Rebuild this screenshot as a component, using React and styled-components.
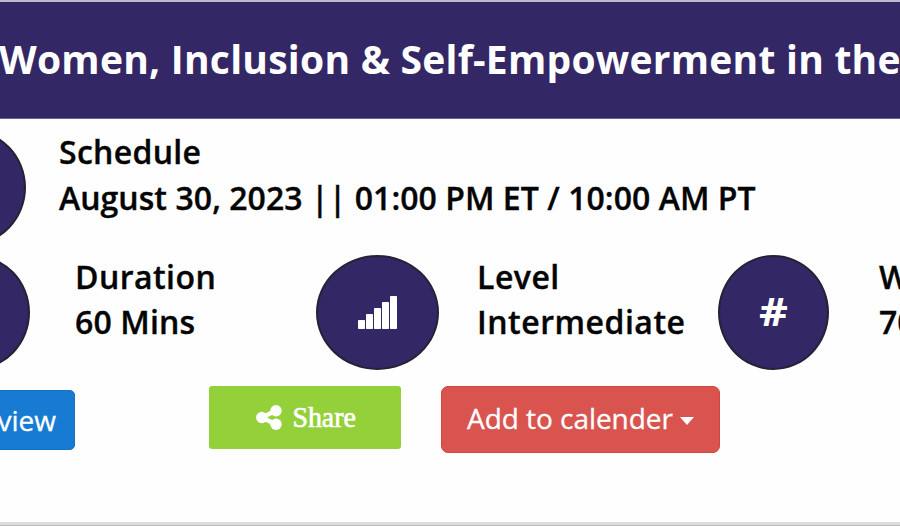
import React from 'react'
import styled, { createGlobalStyle } from 'styled-components'

const GlobalStyle = createGlobalStyle`
  *{
    box-sizing: border-box;
  }
  body{
    margin: 0;
    background: #fefefe;
    overflow: hidden;
    font-family: 'Open Sans', sans-serif;
  }
`
const Page = styled.div`
  width: 900px;
  height: 526px;
  overflow: hidden;
  display: flex;
  flex-direction: column;
`
const Header = styled.header`
  height: 119px;
  flex-shrink: 0;
  border-top: 2px solid #bdb9cf;
  border-bottom: 1px solid #6a6289;
  background: #342765;
  padding-top: 31px;
`
const Title = styled.h1`
  margin: 0 0 0 -1px;
  color: #fff;
  font-size: 39px;
  line-height: 52px;
  font-weight: 700;
  white-space: nowrap;
  letter-spacing: 0.25px;
`
const Row = styled.div`
  display: flex;
  flex-shrink: 0;
  height: 115px;
  margin-top: ${({ $top }) => $top}px;
  margin-left: ${({ $left }) => $left}px;
`
const Circle = styled.div`
  width: ${({ $width }) => $width || 111}px;
  height: 115px;
  flex-shrink: 0;
  border: 2px solid #272136;
  border-radius: 50%;
  background: #342765;
  color: #fff;
  display: flex;
  align-items: center;
  justify-content: center;
`
const Hash = styled.span`
  margin-top: -3px;
  font-size: 39px;
  line-height: 50px;
  font-weight: 700;
  transform: scaleX(1.15);
`
const Info = styled.div`
  flex-shrink: 0;
  width: ${({ $width }) => $width}px;
  margin-left: ${({ $gap }) => $gap}px;
  margin-top: -1px;
  color: #050505;
  font-size: 32px;
  line-height: ${({ $leading }) => $leading || 45.5}px;
  font-weight: 600;
  white-space: nowrap;
  -webkit-text-stroke: 0.35px #050505;
`
const Line = styled.div`
  letter-spacing: ${({ $spacing }) => $spacing || 0}px;
`
const Actions = styled.div`
  display: flex;
  align-items: flex-start;
  margin-top: 15.5px;
  margin-left: -80px;
`
const Button = styled.button`
  border: none;
  padding: 0;
  display: flex;
  align-items: center;
  justify-content: center;
  flex-shrink: 0;
  color: #fff;
  font-family: inherit;
  font-size: 28px;
  white-space: nowrap;
  -webkit-text-stroke: 0.3px #fff;
`
const PreviewButton = styled(Button)`
  width: 155px;
  height: 60.5px;
  margin-top: 4px;
  padding-right: 18px;
  justify-content: flex-end;
  border: 1px solid #1472c4;
  border-radius: 5px;
  background: #187bd3;
`
const ShareButton = styled(Button)`
  width: 192px;
  height: 63px;
  margin-left: 134.4px;
  padding-left: 2px;
  gap: 8px;
  border-radius: 3px;
  background: #94d03a;
  font-family: 'Liberation Serif', serif;
  font-size: 30px;
  -webkit-text-stroke: 0.7px #fff;
`
const ShareLabel = styled.span`
  margin-right: -2px;
  transform: scaleX(0.93);
`
const CalendarButton = styled(Button)`
  width: 279px;
  height: 67.5px;
  margin-left: 39.6px;
  padding-bottom: 2px;
  gap: 7px;
  border: 1px solid #d24540;
  border-radius: 7px;
  background: #d9534f;
  letter-spacing: -0.05px;
`
const Caret = styled.span`
  margin-top: 5px;
  border-top: 8px solid #fff;
  border-left: 7.5px solid transparent;
  border-right: 7.5px solid transparent;
`
const Footer = styled.div`
  height: 4px;
  flex-shrink: 0;
  margin-top: auto;
  border-bottom: 1px solid #bcbcbc;
  background: #dcdcdc;
`

const SignalIcon = () => (
  <svg width='40' height='33' viewBox='0 0 40 33' fill='#fff'>
    <rect x='0' y='24' width='7' height='9' rx='.8' />
    <rect x='8' y='18' width='7' height='15' rx='.8' />
    <rect x='16' y='12' width='7' height='21' rx='.8' />
    <rect x='24' y='6' width='7' height='27' rx='.8' />
    <rect x='32' y='0' width='7' height='33' rx='.8' />
  </svg>
)

const ShareIcon = () => (
  <svg width='26' height='25' viewBox='0 0 26 25' fill='#fff'>
    <path d='M20 5.5 L6 12.5 L20 19.5' fill='none' stroke='#fff' strokeWidth='4.4' />
    <circle cx='5.8' cy='12.5' r='5.7' />
    <circle cx='20' cy='5.8' r='5.7' />
    <circle cx='20' cy='19.2' r='5.7' />
  </svg>
)

const App = () => {
  return (
    <Page>
      <GlobalStyle />
      <Header>
        <Title>Women, Inclusion &amp; Self-Empowerment in the</Title>
      </Header>
      <Row $top={11} $left={-85}>
        <Circle />
        <Info $gap={33}>
          <Line $spacing={0.3}>Schedule</Line>
          <Line $spacing={0.05}>August 30, 2023 || 01:00 PM ET / 10:00 AM PT</Line>
        </Info>
      </Row>
      <Row $top={10} $left={-81}>
        <Circle />
        <Info $gap={45} $width={241} $leading={45}>
          <Line $spacing={0.45}>Duration</Line>
          <Line $spacing={0.15}>60 Mins</Line>
        </Info>
        <Circle $width={123}>
          <SignalIcon />
        </Circle>
        <Info $gap={38} $width={241} $leading={45}>
          <Line $spacing={0.5}>Level</Line>
          <Line $spacing={0.5}>Intermediate</Line>
        </Info>
        <Circle>
          <Hash>#</Hash>
        </Circle>
        <Info $gap={50} $leading={45}>
          <Line>W</Line>
          <Line>70</Line>
        </Info>
      </Row>
      <Actions>
        <PreviewButton>Preview</PreviewButton>
        <ShareButton>
          <ShareIcon />
          <ShareLabel>Share</ShareLabel>
        </ShareButton>
        <CalendarButton>
          Add to calender
          <Caret />
        </CalendarButton>
      </Actions>
      <Footer />
    </Page>
  )
}

export default App
